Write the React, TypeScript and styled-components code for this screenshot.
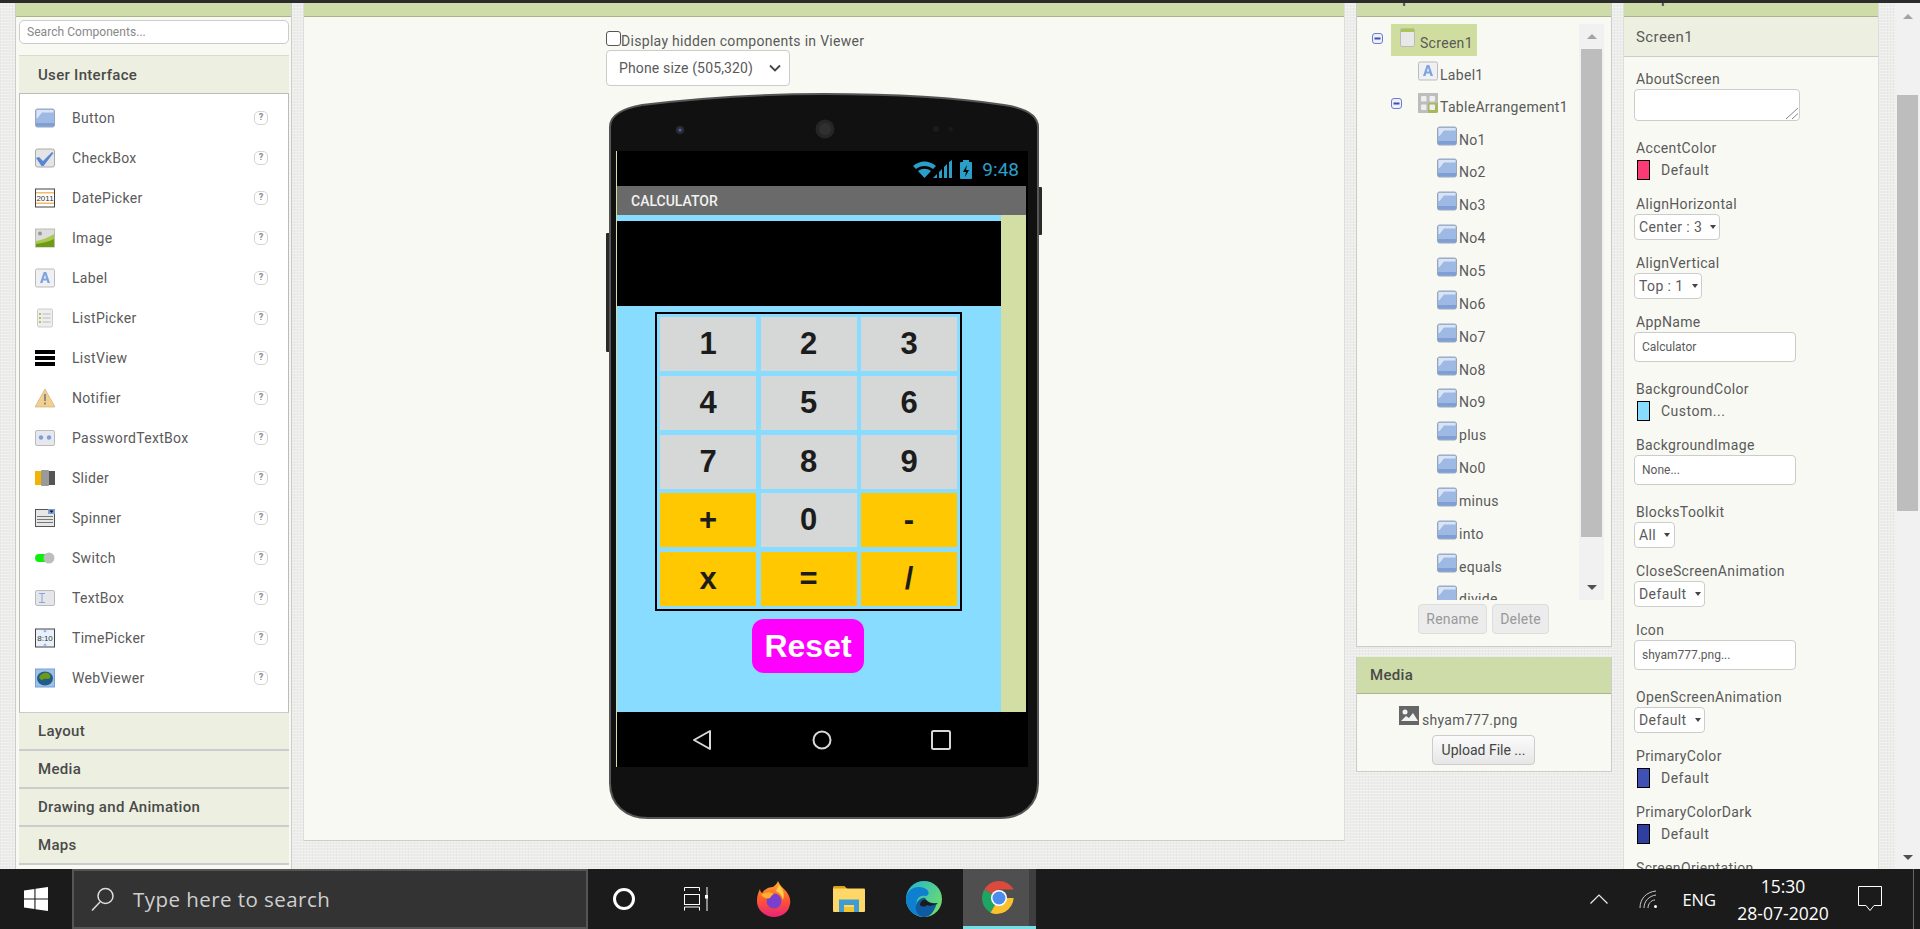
import React from "react";
import styled, { createGlobalStyle } from "styled-components";

const GlobalStyle = createGlobalStyle`
  html, body { margin: 0; padding: 0; height: 100%; overflow: hidden; }
  body { font-family: Roboto, "Liberation Sans", sans-serif; color: #5a5a5a; }
  * { box-sizing: border-box; }
`;

// Palette icons, drawn by hand on a 20x20 box
const ButtonIcon = () => (
  <svg width="20" height="20" viewBox="0 0 20 20">
    <rect x="0.5" y="1" width="19" height="18" rx="2" fill="#9db9e4" stroke="#9aa5b8" />
    <rect x="1" y="15" width="18" height="3.5" fill="#7f9fd4" />
    <path d="M1.5 2h17v2.5H7L2.5 10H1.5z" fill="#d9e5f7" />
  </svg>
);
const CheckBoxIcon = () => (
  <svg width="20" height="20" viewBox="0 0 20 20">
    <rect x="0.5" y="1" width="19" height="18" rx="2" fill="#e4e4e4" stroke="#aaa" />
    <path d="M1 10l3-1 4 4 9-9 1.500 1-10 13h-2z" fill="#5b86d2" />
  </svg>
);
const DatePickerIcon = () => (
  <svg width="20" height="20" viewBox="0 0 20 20">
    <rect x="0.500" y="1" width="19" height="18" fill="#fff" stroke="#444" />
    <rect x="1" y="4" width="18" height="1.500" fill="#f2b968" />
    <rect x="1" y="14.500" width="18" height="1.500" fill="#f2b968" />
    <text x="10" y="13" fontSize="8" textAnchor="middle" fontFamily="Liberation Sans" fill="#333">2011</text>
  </svg>
);
const ImageIcon = () => (
  <svg width="20" height="20" viewBox="0 0 20 20">
    <rect x="0.500" y="1" width="19" height="18" fill="#ddd" stroke="#bbb" />
    <circle cx="5" cy="5.500" r="2" fill="#999" />
    <path d="M1 13c6-1 11-3 18-7v13H1z" fill="#a8c94f" />
    <path d="M1 16c6-1 12-2 18-5v8H1z" fill="#6f9a16" />
  </svg>
);
const LabelIcon = () => (
  <svg width="20" height="20" viewBox="0 0 20 20">
    <rect x="0.500" y="1" width="19" height="18" rx="1.500" fill="#eef0f4" stroke="#bbb" />
    <path d="M8.700 4h2.600l3.700 11h-2.500l-.7-2.500H8.200L7.500 15H5zM8.800 10.500h2.400L10 6.700z" fill="#7fa3dd" />
  </svg>
);
const ListPickerIcon = () => (
  <svg width="20" height="20" viewBox="0 0 20 20">
    <rect x="2.500" y="1" width="15" height="18" rx="1.500" fill="#eee" stroke="#ccc" />
    <path d="M4 5h2v2H4zM4 9h2v2H4zM4 13h2v2H4z" fill="#a8c94f" />
    <path d="M7.500 5.500h8v1h-8zM7.500 9.500h8v1h-8zM7.500 13.500h8v1h-8z" fill="#bbb" />
  </svg>
);
const ListViewIcon = () => (
  <svg width="20" height="20" viewBox="0 0 20 20">
    <path d="M0 2h20v4H0zM0 8h20v4H0zM0 14h20v4H0z" fill="#000" />
  </svg>
);
const NotifierIcon = () => (
  <svg width="20" height="20" viewBox="0 0 20 20">
    <path d="M10 1l10 18H0z" fill="#f0cf8f" stroke="#c9a86a" strokeWidth="0.600" />
    <path d="M9 6h2v7H9zM9 14.500h2v2H9z" fill="#8a8a8a" />
  </svg>
);
const PasswordIcon = () => (
  <svg width="20" height="20" viewBox="0 0 20 20">
    <rect x="0.500" y="2.500" width="19" height="15" rx="1.500" fill="#e6e8ee" stroke="#bbb" />
    <circle cx="6" cy="9.500" r="2.200" fill="#7d9fd8" />
    <circle cx="14" cy="9.500" r="2.200" fill="#7d9fd8" />
  </svg>
);
const SliderIcon = () => (
  <svg width="20" height="20" viewBox="0 0 20 20">
    <rect x="0" y="3" width="6" height="14" fill="#f2b400" />
    <rect x="6" y="2" width="8" height="16" rx="1" fill="#9a9a9a" />
    <rect x="14" y="3" width="6" height="14" fill="#555" />
  </svg>
);
const SpinnerIcon = () => (
  <svg width="20" height="20" viewBox="0 0 20 20">
    <rect x="0.500" y="1.500" width="19" height="17" fill="#e6e6e6" stroke="#555" />
    <rect x="13" y="1" width="7" height="5" fill="#7d9fd8" />
    <path d="M14.500 2.500h4L16.500 5z" fill="#111" />
    <path d="M2 8h16v1H2zM2 11h16v1H2zM2 14h16v1H2z" fill="#777" />
  </svg>
);
const SwitchIcon = () => (
  <svg width="20" height="20" viewBox="0 0 20 20">
    <rect x="0" y="6" width="14" height="8" rx="4" fill="#0cf00c" />
    <circle cx="14" cy="10" r="5.500" fill="#bdbdbd" />
  </svg>
);
const TextBoxIcon = () => (
  <svg width="20" height="20" viewBox="0 0 20 20">
    <rect x="0.500" y="2.500" width="19" height="15" rx="1.500" fill="#e4e6ea" stroke="#bbb" />
    <path d="M4 5h6v1H7.500v8H10v1H4v-1h2.500V6H4z" fill="#8aa6d6" />
  </svg>
);
const TimePickerIcon = () => (
  <svg width="20" height="20" viewBox="0 0 20 20">
    <rect x="0.500" y="1" width="19" height="18" fill="#e8f1fb" stroke="#444" />
    <path d="M8 2.500h4L10 4.500zM8 17.500h4l-2-2z" fill="#7d9fd8" />
    <text x="10" y="13" fontSize="8" textAnchor="middle" fontFamily="Liberation Sans" fill="#333">8:10</text>
  </svg>
);
const WebViewerIcon = () => (
  <svg width="20" height="20" viewBox="0 0 20 20">
    <rect x="0.500" y="1" width="19" height="18" fill="#9cc0ea" stroke="#7d9fd8" />
    <ellipse cx="10" cy="10.500" rx="8" ry="7" fill="#1f5c86" />
    <path d="M4 9c2-4 6-5 9-4 2 1 3 3 2 5-2 2-4 0-6 1s-3 2-5-2z" fill="#6f9a16" />
  </svg>
);
const ScreenIcon = () => (
  <svg width="15" height="19" viewBox="0 0 15 19">
    <rect x="0.500" y="0.500" width="14" height="18" rx="1.500" fill="#e8e8e8" stroke="#bbb" />
    <rect x="1" y="1" width="13" height="3" fill="#a8c94f" />
  </svg>
);
const TableIcon = () => (
  <svg width="20" height="20" viewBox="0 0 20 20">
    <rect width="20" height="20" rx="1.500" fill="#a8b860" />
    <path d="M0 0h20v10H10v10H0z" fill="#bdbdbd" />
    <rect x="3" y="3" width="5.500" height="5.500" rx="1" fill="#eee" />
    <rect x="11.500" y="3" width="5.500" height="5.500" rx="1" fill="#eee" />
    <rect x="3" y="11.500" width="5.500" height="5.500" rx="1" fill="#eee" />
    <rect x="11.500" y="11.500" width="5.500" height="5.500" rx="1" fill="#eee" />
  </svg>
);
const MinusBox = () => (
  <svg width="11" height="11" viewBox="0 0 11 11">
    <rect x="0.500" y="0.500" width="10" height="10" rx="2.500" fill="#eef0fa" stroke="#6f7bd0" />
    <rect x="2.500" y="4.500" width="6" height="2" fill="#3f4fb0" />
  </svg>
);
const MediaFileIcon = () => (
  <svg width="20" height="20" viewBox="0 0 20 20">
    <rect width="20" height="19" fill="#666" />
    <circle cx="6" cy="6" r="2.500" fill="#f3f3f3" />
    <path d="M2 15l5-5 3 2 4-5 5 8z" fill="#f3f3f3" />
  </svg>
);

const PhoneBody = () => (
  <PhoneArt viewBox="0 0 436 726" width="436" height="726">
    <rect x="0" y="140" width="6" height="119" rx="1" fill="#2a2a2a" />
    <rect x="430" y="94" width="6" height="48" rx="1" fill="#2a2a2a" />
    <path
      d="M4 34C4 22 18 15 36 12C110 3 180 1 218 1C270 1 340 3 398 12C418 15 432 22 432 34V690C432 712 416 725 394 725H42C20 725 4 712 4 690Z"
      fill="#111"
      stroke="#555"
      strokeWidth="2"
    />
    <circle cx="74" cy="37" r="4" fill="#2c2c36" />
    <circle cx="74" cy="37" r="1.500" fill="#5560a0" />
    <circle cx="219" cy="36" r="9.500" fill="#262626" />
    <circle cx="219" cy="36" r="6" fill="#303030" />
    <circle cx="330" cy="36" r="3" fill="#1c1c1c" />
    <circle cx="345" cy="36" r="2" fill="#1c1c1c" />
  </PhoneArt>
);

const StatusIcons = () => (
  <svg width="62" height="20" viewBox="0 0 62 20">
    <path d="M1 6c7-6 16-6 23 0l-3 3c-5-4-12-4-17 0zM6 11c4-3 9-3 13 0l-6.500 7z" fill="#2a9fc9" />
    <path d="M21 18l4-4v4zM27 18v-6l3-3v9zM32 18V7l3-3v14zM37 18V2l3-2v18z" fill="#2a9fc9" />
    <rect x="48" y="2" width="12" height="17" rx="1" fill="#2a9fc9" />
    <rect x="51" y="0" width="6" height="3" fill="#2a9fc9" />
    <path d="M55 5l-4 7h3l-1 5 4-7h-3z" fill="#000" />
  </svg>
);
const BackIcon = () => (
  <svg width="20" height="22" viewBox="0 0 20 22">
    <path d="M18 2v18L2 11z" fill="none" stroke="#d8d8d8" strokeWidth="2" strokeLinejoin="round" />
  </svg>
);
const HomeIcon = () => (
  <svg width="20" height="20" viewBox="0 0 20 20">
    <circle cx="10" cy="10" r="8.500" fill="none" stroke="#d8d8d8" strokeWidth="2" />
  </svg>
);
const RecentIcon = () => (
  <svg width="20" height="20" viewBox="0 0 20 20">
    <rect x="1" y="1" width="18" height="18" rx="1.500" fill="none" stroke="#d8d8d8" strokeWidth="2" />
  </svg>
);

// Taskbar drawings
const WindowsLogo = () => (
  <svg width="24" height="24" viewBox="0 0 24 24">
    <path d="M0 3.400l10.400-1.400v9.500H0zM11.500 1.800L24 0v11.500H11.500zM0 12.500h10.400V22L0 20.600zM11.500 12.500H24V24l-12.500-1.800z" fill="#fff" />
  </svg>
);
const SearchGlass = () => (
  <svg width="24" height="24" viewBox="0 0 24 24">
    <circle cx="14.500" cy="9" r="7.500" fill="none" stroke="#ddd" strokeWidth="1.500" />
    <path d="M9 15L1 23.500" stroke="#ddd" strokeWidth="1.500" />
  </svg>
);
const TaskView = () => (
  <svg width="24" height="24" viewBox="0 0 24 24">
    <path d="M0.500 4V0.500h15V4M0.500 23.500V20h15v3.500M23 0v24" fill="none" stroke="#fff" />
    <rect x="0.500" y="7.500" width="15" height="10" fill="none" stroke="#fff" />
    <rect x="21" y="8" width="3.500" height="3.500" fill="#fff" />
  </svg>
);
const FirefoxLogo = () => (
  <svg width="34" height="36" viewBox="0 0 34 36">
    <defs>
      <linearGradient id="ffBody" x1="0" y1="0" x2="0" y2="1">
        <stop offset="0" stopColor="#ffb02e" />
        <stop offset="0.500" stopColor="#ff5a2c" />
        <stop offset="1" stopColor="#e8227a" />
      </linearGradient>
    </defs>
    <path d="M21 0c1 3 3 5 6 8 5 5 7 10 6 15-1 8-8 13-16 13S1 30 0 22c-.500-5 1-10 3-14 0 2 1 3 2 4 2-3 6-6 11-6 2-2 4-3 5-6z" fill="url(#ffBody)" />
    <circle cx="17" cy="20" r="7.500" fill="#7b3fd0" />
    <path d="M4 14c4-3 9-3 13-1-2 1-3 2-4 4-3 1-6 0-9-3z" fill="#ffb02e" />
    <path d="M22 4c4 4 6 9 4 15-1-4-3-7-7-9 1-2 2-4 3-6z" fill="#ffcf4a" />
  </svg>
);
const ExplorerLogo = () => (
  <svg width="32" height="26" viewBox="0 0 32 26">
    <path d="M0 1.500A1.500 1.500 0 0 1 1.500 0h10l3 3H0z" fill="#d9a21a" />
    <path d="M0 2.500h31a1 1 0 0 1 1 1V25a1 1 0 0 1-1 1H1a1 1 0 0 1-1-1z" fill="#fdd868" />
    <path d="M6 26V13.500h20V26h-5v-7h-10v7z" fill="#3f9bd0" />
    <rect x="11" y="21" width="10" height="5" fill="#f4c430" />
  </svg>
);
const EdgeLogo = () => (
  <svg width="36" height="36" viewBox="0 0 36 36">
    <defs>
      <linearGradient id="edgeTop" x1="0" y1="0" x2="1" y2="0.700">
        <stop offset="0" stopColor="#1fb5d8" />
        <stop offset="1" stopColor="#6fdc6a" />
      </linearGradient>
    </defs>
    <circle cx="18" cy="18" r="18" fill="url(#edgeTop)" />
    <path d="M0 18C1 8 10 4 18 7c6 2 6 8 1 8-6-1-10 4-8 11 1 4 6 8 13 8a18 18 0 0 1-6 2C8 36 0 28 0 18z" fill="#0f7fd0" />
    <path d="M18 36c-6-1-9-6-8-11 1-5 5-9 9-8 2 3 5 6 12 5-3 9-7 14-13 14z" fill="#0f5aa0" />
    <path d="M14 24c0-3 3-6 6-5 2 3 7 4 12 3-1 1-2 1-4 2-4 1-5 1-7 0-2 2-5 2-7 0z" fill="#1b1b1b" />
  </svg>
);
const ChromeLogo = () => (
  <svg width="34" height="34" viewBox="0 0 34 34">
    <path d="M17 17L2.300 8.500A17 17 0 0 1 31.700 8.500H17z" fill="#db4a3c" />
    <path d="M17 17l-8.500 14.700A17 17 0 0 1 2.300 8.500z" fill="#1fa463" />
    <path d="M17 17h14.700a17 17 0 0 1-23.200 14.700z" fill="#fbc02d" />
    <circle cx="17" cy="17" r="8" fill="#fff" />
    <circle cx="17" cy="17" r="6.500" fill="#4a8cf0" />
  </svg>
);
const TrayChevron = () => (
  <svg width="18" height="10" viewBox="0 0 18 10">
    <path d="M0.500 9.500L9 1l8.500 8.500" fill="none" stroke="#eee" strokeWidth="1.200" />
  </svg>
);
const TrayWifi = () => (
  <svg width="19" height="19" viewBox="0 0 19 19">
    <g fill="none" stroke="#ccc" strokeWidth="1">
      <path d="M1 18C1 9 7 2 17 1" />
      <path d="M5 18C5 11 10 6 17 5" />
      <path d="M9 18C9 14 12 10 16 10" />
    </g>
    <circle cx="16.500" cy="16.500" r="1.500" fill="#fff" />
  </svg>
);
const TrayNote = () => (
  <svg width="24" height="26" viewBox="0 0 24 26">
    <path d="M0.500 0.500h23v19H16l-4 5-4-5H0.500z" fill="none" stroke="#fff" strokeWidth="1" />
  </svg>
);

const paletteItems: [string, React.FC][] = [
  ["Button", ButtonIcon],
  ["CheckBox", CheckBoxIcon],
  ["DatePicker", DatePickerIcon],
  ["Image", ImageIcon],
  ["Label", LabelIcon],
  ["ListPicker", ListPickerIcon],
  ["ListView", ListViewIcon],
  ["Notifier", NotifierIcon],
  ["PasswordTextBox", PasswordIcon],
  ["Slider", SliderIcon],
  ["Spinner", SpinnerIcon],
  ["Switch", SwitchIcon],
  ["TextBox", TextBoxIcon],
  ["TimePicker", TimePickerIcon],
  ["WebViewer", WebViewerIcon],
];

const drawers = ["Layout", "Media", "Drawing and Animation", "Maps"];

const keys = ["1", "2", "3", "4", "5", "6", "7", "8", "9", "+", "0", "-", "x", "=", "/"];
const orangeKeys = "+-x=/";

const buttonNodes = ["No1", "No2", "No3", "No4", "No5", "No6", "No7", "No8", "No9", "plus", "No0", "minus", "into", "equals", "divide"];

type Prop =
  | { label: string; kind: "area" }
  | { label: string; kind: "color"; color: string; value: string }
  | { label: string; kind: "select"; value: string; width: number }
  | { label: string; kind: "input"; value: string };

const properties: Prop[] = [
  { label: "AboutScreen", kind: "area" },
  { label: "AccentColor", kind: "color", color: "#fb3a76", value: "Default" },
  { label: "AlignHorizontal", kind: "select", value: "Center : 3", width: 86 },
  { label: "AlignVertical", kind: "select", value: "Top : 1", width: 68 },
  { label: "AppName", kind: "input", value: "Calculator" },
  { label: "BackgroundColor", kind: "color", color: "#87dcff", value: "Custom..." },
  { label: "BackgroundImage", kind: "input", value: "None..." },
  { label: "BlocksToolkit", kind: "select", value: "All", width: 41 },
  { label: "CloseScreenAnimation", kind: "select", value: "Default", width: 71 },
  { label: "Icon", kind: "input", value: "shyam777.png..." },
  { label: "OpenScreenAnimation", kind: "select", value: "Default", width: 71 },
  { label: "PrimaryColor", kind: "color", color: "#3f51b5", value: "Default" },
  { label: "PrimaryColorDark", kind: "color", color: "#303f9f", value: "Default" },
  { label: "ScreenOrientation", kind: "select", value: "Unspecified", width: 100 },
];

const App: React.FC = () => {
  return (
    <Page>
      <GlobalStyle />
      <TopStrip />
      <Main>
        <PaletteColumn>
          <PanelHeader>Palette</PanelHeader>
          <SearchBox placeholder="Search Components..." readOnly />
          <GroupHeader>User Interface</GroupHeader>
          <PaletteList>
            {paletteItems.map(([name, Icon]) => (
              <PaletteRow key={name}>
                <IconSlot>
                  <Icon />
                </IconSlot>
                <PaletteName>{name}</PaletteName>
                <HelpMark>?</HelpMark>
              </PaletteRow>
            ))}
          </PaletteList>
          {drawers.map((d) => (
            <Drawer key={d}>{d}</Drawer>
          ))}
        </PaletteColumn>

        <ViewerColumn>
          <PanelHeader>Viewer</PanelHeader>
          <ViewerBody>
            <CheckRow>
              <CheckBox type="checkbox" readOnly />
              Display hidden components in Viewer
            </CheckRow>
            <SizeSelect>
              Phone size (505,320)
              <svg width="12" height="8" viewBox="0 0 12 8">
                <path d="M1 1.500l5 5 5-5" fill="none" stroke="#444" strokeWidth="1.800" />
              </svg>
            </SizeSelect>
            <Phone>
              <PhoneBody />
              <Screen>
                <StatusBar>
                  <StatusIcons />
                  <Clock>9:48</Clock>
                </StatusBar>
                <TitleBar>CALCULATOR</TitleBar>
                <ScreenBody>
                  <Form>
                    <Display />
                    <KeyTable>
                      {keys.map((k) => (
                        <Key key={k} $accent={orangeKeys.includes(k)}>
                          {k}
                        </Key>
                      ))}
                    </KeyTable>
                    <ResetButton>Reset</ResetButton>
                  </Form>
                  <SideStrip />
                </ScreenBody>
                <NavBar>
                  <BackIcon />
                  <HomeIcon />
                  <RecentIcon />
                </NavBar>
              </Screen>
            </Phone>
          </ViewerBody>
        </ViewerColumn>

        <ComponentsColumn>
          <TreePanel>
            <PanelHeader>Components</PanelHeader>
            <TreeArea>
              <TreeList>
                <ScreenRow>
                  <Toggle $top={9}>
                    <MinusBox />
                  </Toggle>
                  <ScreenChip>
                    <ScreenIcon />
                    <ScreenName>Screen1</ScreenName>
                  </ScreenChip>
                </ScreenRow>
                <TreeRow $indent={61}>
                  <NodeIcon>
                    <LabelIcon />
                  </NodeIcon>
                  <NodeName>Label1</NodeName>
                </TreeRow>
                <TreeRow $indent={34} $tall>
                  <Toggle $top={7}>
                    <MinusBox />
                  </Toggle>
                  <NodeIcon $left={16}>
                    <TableIcon />
                  </NodeIcon>
                  <NodeName>TableArrangement1</NodeName>
                </TreeRow>
                {buttonNodes.map((n) => (
                  <TreeRow key={n} $indent={80} $fine>
                    <NodeIcon>
                      <ButtonIcon />
                    </NodeIcon>
                    <NodeName>{n}</NodeName>
                  </TreeRow>
                ))}
              </TreeList>
              <TreeScroll>
                <ArrowCell $h={25}>
                  <ArrowUp />
                </ArrowCell>
                <ScrollThumb $top={0} $h={488} />
                <ArrowCell $h={26} $end>
                  <ArrowDown />
                </ArrowCell>
              </TreeScroll>
            </TreeArea>
            <TreeButtons>
              <DisabledButton $w={69}>Rename</DisabledButton>
              <DisabledButton $w={57}>Delete</DisabledButton>
            </TreeButtons>
          </TreePanel>
          <MediaPanel>
            <PanelHeader>Media</PanelHeader>
            <MediaRow>
              <MediaFileIcon />
              <MediaName>shyam777.png</MediaName>
            </MediaRow>
            <UploadButton>Upload File ...</UploadButton>
          </MediaPanel>
        </ComponentsColumn>

        <PropertiesColumn>
          <PanelHeader>Properties</PanelHeader>
          <SubHeader>Screen1</SubHeader>
          <PropList>
            {properties.map((p) => (
              <div key={p.label}>
                <PropLabel>{p.label}</PropLabel>
                {p.kind === "area" && (
                  <TextArea>
                    <svg width="14" height="13" viewBox="0 0 14 13">
                      <path d="M1 12L13 1M7 12l6-5.500" stroke="#666" strokeWidth="0.800" />
                    </svg>
                  </TextArea>
                )}
                {p.kind === "color" && (
                  <ColorRow>
                    <Swatch $color={p.color} />
                    {p.value}
                  </ColorRow>
                )}
                {p.kind === "select" && (
                  <PropSelect $width={p.width}>
                    {p.value}
                    <MiniCaret />
                  </PropSelect>
                )}
                {p.kind === "input" && <PropInput>{p.value}</PropInput>}
              </div>
            ))}
          </PropList>
        </PropertiesColumn>

        <PageScroll>
          <ArrowCell $h={26}>
            <ArrowUp />
          </ArrowCell>
          <ScrollThumb $top={66} $h={416} />
          <ArrowCell $h={24} $end>
            <ArrowDown />
          </ArrowCell>
        </PageScroll>
      </Main>

      <Taskbar>
        <StartCell>
          <WindowsLogo />
        </StartCell>
        <SearchField>
          <SearchGlass />
          <SearchHint>Type here to search</SearchHint>
        </SearchField>
        <Cortana />
        <TaskSlot $left={49}>
          <TaskView />
        </TaskSlot>
        <TaskSlot $left={49}>
          <FirefoxLogo />
        </TaskSlot>
        <TaskSlot $left={42}>
          <ExplorerLogo />
        </TaskSlot>
        <TaskSlot $left={41}>
          <EdgeLogo />
        </TaskSlot>
        <ActiveTask>
          <ChromeLogo />
        </ActiveTask>
        <Tray>
          <TrayChevron />
          <TaskSlot $left={31}>
            <TrayWifi />
          </TaskSlot>
          <TrayLang>ENG</TrayLang>
          <TrayClock>
            <span>15:30</span>
            <span>28-07-2020</span>
          </TrayClock>
          <TaskSlot $left={25}>
            <TrayNote />
          </TaskSlot>
          <TrayEdge />
        </Tray>
      </Taskbar>
    </Page>
  );
};

export default App;

const Page = styled.div`
  width: 1920px;
  height: 929px;
  display: flex;
  flex-direction: column;
  overflow: hidden;
  background-color: #ebebe9;
`;

const TopStrip = styled.div`
  height: 3px;
  flex: none;
  background: #2b2b2b;
`;

const Main = styled.div`
  flex: 1;
  min-height: 0;
  display: flex;
  align-items: stretch;
  padding-left: 15px;
  overflow: hidden;
  background-color: #ececea;
  background-image: repeating-linear-gradient(0deg, rgba(255, 255, 255, 0.35) 0 1px, transparent 1px 3px),
    repeating-linear-gradient(90deg, rgba(0, 0, 0, 0.025) 0 1px, transparent 1px 3px);
`;

const PanelHeader = styled.div`
  height: 37px;
  flex: none;
  padding-left: 13px;
  display: flex;
  align-items: center;
  background: #cddca8;
  border-bottom: 1px solid #a9b48f;
  font-size: 15px;
  font-weight: 500;
  letter-spacing: 0.3px;
  color: #4a4a4a;
`;

const PaletteColumn = styled.div`
  width: 277px;
  height: 900px;
  flex: none;
  margin-top: -23px;
  background: #f8f9f3;
  border-left: 1px solid #ccc;
  border-right: 1px solid #ccc;
`;

const SearchBox = styled.input`
  display: block;
  width: 270px;
  height: 24px;
  margin: 3px 0 11px 3px;
  padding: 0 7px;
  border: 1px solid #ccc;
  border-radius: 5px;
  background: #fff;
  font: 12px Roboto, sans-serif;
  letter-spacing: 0.05px;
  &::placeholder {
    color: #888;
  }
`;

const GroupHeader = styled.div`
  height: 38px;
  margin: 0 0 0 3px;
  width: 270px;
  padding-left: 19px;
  display: flex;
  align-items: center;
  background: #edf0e0;
  border-top: 1px solid #d8dcc8;
  font-size: 15px;
  font-weight: 500;
  letter-spacing: 0.3px;
  color: #4a4a4a;
`;

const PaletteList = styled.div`
  width: 270px;
  height: 620px;
  margin-left: 3px;
  padding-top: 4px;
  background: #fff;
  border: 1px solid #bbb;
  border-bottom-color: #ccc;
`;

const PaletteRow = styled.div`
  height: 40px;
  display: flex;
  align-items: center;
  padding-left: 15px;
`;

const IconSlot = styled.span`
  width: 20px;
  height: 20px;
  flex: none;
  display: flex;
  margin-right: 17px;
`;

const PaletteName = styled.span`
  flex: 1;
  font-size: 14px;
  letter-spacing: 0.3px;
`;

const HelpMark = styled.span`
  width: 14px;
  height: 14px;
  margin-right: 20px;
  border: 1.5px solid #d4d4d4;
  border-radius: 5px;
  font-size: 9px;
  font-weight: 700;
  line-height: 11px;
  text-align: center;
  color: #888;
`;

const Drawer = styled.div`
  width: 270px;
  height: 38px;
  margin-left: 3px;
  padding-left: 19px;
  display: flex;
  align-items: center;
  background: #edf0e0;
  border-bottom: 2px solid #ccc;
  font-size: 15px;
  font-weight: 500;
  letter-spacing: 0.3px;
  color: #4a4a4a;
`;

const ViewerColumn = styled.div`
  width: 1042px;
  height: 861px;
  flex: none;
  margin: -23px 0 0 11px;
  background: #f8f9f3;
  border-bottom: 1px solid #ccc;
  border-left: 1px solid #ddd;
  border-right: 1px solid #ddd;
`;

const ViewerBody = styled.div`
  padding: 14px 0 0 302px;
`;

const CheckRow = styled.div`
  height: 19px;
  display: flex;
  align-items: flex-start;
  font-size: 14px;
  line-height: 20px;
  letter-spacing: 0.3px;
`;

const CheckBox = styled.input`
  appearance: none;
  width: 15px;
  height: 15px;
  margin: 0;
  background: #fff;
  border: 1px solid #555;
  border-radius: 3px;
`;

const SizeSelect = styled.div`
  width: 184px;
  height: 36px;
  padding: 0 8px 0 12px;
  display: flex;
  align-items: center;
  justify-content: space-between;
  background: #fff;
  border: 1px solid #ccc;
  border-radius: 4px;
  font-size: 14px;
  letter-spacing: 0.15px;
`;

const Phone = styled.div`
  position: relative;
  width: 436px;
  height: 726px;
  margin-top: 7px;
  padding: 58px 0 0 10px;
`;

const PhoneArt = styled.svg`
  position: absolute;
  left: 0;
  top: 0;
`;

const Screen = styled.div`
  position: relative;
  width: 412px;
  height: 616px;
  display: flex;
  flex-direction: column;
  background: #000;
  border-left: 1px solid #d2dea3;
`;

const StatusBar = styled.div`
  height: 35px;
  flex: none;
  display: flex;
  align-items: center;
  justify-content: flex-end;
  padding: 2px 9px 0 0;
  gap: 8px;
`;

const Clock = styled.span`
  font-size: 19px;
  color: #2a9fc9;
`;

const TitleBar = styled.div`
  width: 409px;
  height: 29px;
  flex: none;
  padding-left: 14px;
  display: flex;
  align-items: center;
  background: #6a6a6a;
  font-size: 14px;
  font-weight: 500;
  color: #f2f2f2;
`;

const ScreenBody = styled.div`
  width: 409px;
  height: 497px;
  flex: none;
  display: flex;
`;

const Form = styled.div`
  width: 384px;
  padding-top: 6px;
  background: #87dcff;
`;

const SideStrip = styled.div`
  flex: 1;
  background: #d2dea3;
`;

const Display = styled.div`
  height: 85px;
  background: #000;
`;

const KeyTable = styled.div`
  width: 307px;
  height: 299px;
  margin: 6px 0 0 38px;
  padding: 3px;
  display: grid;
  grid-template-columns: repeat(3, 96px);
  grid-template-rows: repeat(5, 54px);
  column-gap: 4.5px;
  row-gap: 4.75px;
  border: 2px solid #000;
`;

const Key = styled.div<{ $accent: boolean }>`
  display: flex;
  align-items: center;
  justify-content: center;
  background: ${(p) => (p.$accent ? "#ffc800" : "#d6d7d7")};
  font-family: "Liberation Sans", Arial, sans-serif;
  font-size: 31px;
  font-weight: 700;
  color: #1c1c1c;
`;

const ResetButton = styled.div`
  width: 112px;
  height: 54px;
  margin: 8px 0 0 135px;
  display: flex;
  align-items: center;
  justify-content: center;
  background: #ff00ff;
  border-radius: 12px;
  font-family: "Liberation Sans", Arial, sans-serif;
  font-size: 32px;
  font-weight: 700;
  color: #fff;
`;

const NavBar = styled.div`
  flex: 1;
  display: grid;
  grid-template-columns: 120px 119px 111px;
  padding-left: 75px;
  align-items: center;
  justify-items: start;
`;

const ComponentsColumn = styled.div`
  width: 256px;
  flex: none;
  margin: -23px 0 0 11px;
`;

const TreePanel = styled.div`
  height: 667px;
  display: flex;
  flex-direction: column;
  background: #f8f9f3;
  border: 1px solid #ccc;
  border-top: 0;
`;

const TreeArea = styled.div`
  height: 576px;
  flex: none;
  margin-top: 7px;
  display: flex;
  padding-right: 7px;
`;

const TreeList = styled.div`
  flex: 1;
  min-width: 0;
  overflow: hidden;
`;

const ScreenRow = styled.div`
  height: 35px;
  position: relative;
  padding-left: 34px;
`;

const Toggle = styled.span<{ $top: number }>`
  display: flex;
  flex: none;
  margin-top: ${(p) => p.$top}px;
  ${ScreenRow} & {
    position: absolute;
    left: 15px;
    top: 0;
  }
`;

const ScreenChip = styled.div`
  width: 86px;
  height: 32px;
  display: flex;
  padding: 4px 0 0 9px;
  background: #cfdd9f;
`;

const ScreenName = styled.span`
  margin: 6px 0 0 5px;
  font-size: 14px;
  line-height: 18px;
  letter-spacing: 0.3px;
`;

const TreeRow = styled.div<{ $indent: number; $fine?: boolean; $tall?: boolean }>`
  height: ${(p) => (p.$fine ? "32.85px" : p.$tall ? "32.6px" : "32px")};
  display: flex;
  align-items: flex-start;
  padding-left: ${(p) => p.$indent}px;
`;

const NodeIcon = styled.span<{ $left?: number }>`
  display: flex;
  flex: none;
  width: 20px;
  height: 20px;
  margin: 2px 2px 0 ${(p) => p.$left ?? 0}px;
`;

const NodeName = styled.span`
  margin-top: 7px;
  font-size: 14px;
  line-height: 18px;
  letter-spacing: 0.3px;
  white-space: nowrap;
`;

const TreeScroll = styled.div`
  width: 25px;
  flex: none;
  display: flex;
  flex-direction: column;
  background: #f1f1f1;
`;

const ArrowCell = styled.div<{ $h: number; $end?: boolean }>`
  height: ${(p) => p.$h}px;
  flex: none;
  display: flex;
  align-items: center;
  justify-content: center;
  ${(p) => (p.$end ? "margin-top: auto;" : "")}
`;

const ArrowUp = styled.span`
  width: 0;
  height: 0;
  border: 5.5px solid transparent;
  border-top: 0;
  border-bottom: 5.5px solid #a3a3a3;
`;

const ArrowDown = styled.span`
  width: 0;
  height: 0;
  border: 5.5px solid transparent;
  border-bottom: 0;
  border-top: 5.5px solid #505050;
`;

const ScrollThumb = styled.div<{ $top: number; $h: number }>`
  height: ${(p) => p.$h}px;
  flex: none;
  margin: ${(p) => p.$top}px 2px 0;
  background: #bdbdbd;
`;

const TreeButtons = styled.div`
  display: flex;
  gap: 5px;
  padding: 4px 0 0 61px;
`;

const DisabledButton = styled.div<{ $w: number }>`
  width: ${(p) => p.$w}px;
  height: 30px;
  display: flex;
  align-items: center;
  justify-content: center;
  background: #ececec;
  border: 1px solid #ddd;
  border-radius: 4px;
  font-size: 14px;
  letter-spacing: 0.2px;
  color: #999;
`;

const MediaPanel = styled.div`
  height: 115px;
  margin-top: 10px;
  background: #f8f9f3;
  border: 1px solid #ccc;
  border-top: 0;
`;

const MediaRow = styled.div`
  display: flex;
  align-items: flex-start;
  padding: 12px 0 0 42px;
  height: 41px;
`;

const MediaName = styled.span`
  margin: 5px 0 0 3px;
  font-size: 14px;
  line-height: 18px;
  letter-spacing: 0.3px;
`;

const UploadButton = styled.div`
  width: 103px;
  height: 30px;
  margin-left: 75px;
  display: flex;
  align-items: center;
  justify-content: center;
  background: linear-gradient(#fbfbfb, #e6e6e6);
  border: 1px solid #ccc;
  border-radius: 4px;
  font-size: 14px;
  color: #444;
`;

const PropertiesColumn = styled.div`
  width: 256px;
  flex: none;
  margin: -23px 0 0 11px;
  background: #f8f9f3;
  border-left: 1px solid #ddd;
  border-right: 1px solid #ddd;
`;

const SubHeader = styled.div`
  height: 40px;
  padding-left: 12px;
  display: flex;
  align-items: center;
  background: #edf0e0;
  border-bottom: 1px solid #ccc;
  font-size: 15px;
  letter-spacing: 0.4px;
`;

const PropList = styled.div`
  padding: 12px 0 0 10px;
`;

const PropLabel = styled.div`
  height: 20px;
  padding-left: 2px;
  font-size: 14px;
  line-height: 20px;
  letter-spacing: 0.35px;
`;

const TextArea = styled.div`
  position: relative;
  width: 166px;
  height: 32px;
  margin-bottom: 17px;
  display: flex;
  align-items: flex-end;
  justify-content: flex-end;
  background: #fff;
  border: 1px solid #ccc;
  border-radius: 4px;
`;

const ColorRow = styled.div`
  height: 20px;
  margin: 2px 0 14px;
  padding-left: 3px;
  display: flex;
  align-items: center;
  font-size: 14px;
  letter-spacing: 0.5px;
`;

const Swatch = styled.span<{ $color: string }>`
  width: 13px;
  height: 20px;
  margin-right: 11px;
  background: ${(p) => p.$color};
  border: 1px solid #000;
`;

const PropSelect = styled.div<{ $width: number }>`
  width: ${(p) => p.$width}px;
  height: 26px;
  margin-bottom: 13px;
  padding: 0 0 0 4px;
  display: flex;
  align-items: center;
  gap: 8px;
  background: #fff;
  border: 1px solid #ccc;
  border-radius: 4px;
  font-size: 14px;
  letter-spacing: 0.4px;
  white-space: nowrap;
`;

const MiniCaret = styled.span`
  width: 0;
  height: 0;
  border: 3px solid transparent;
  border-bottom: 0;
  border-top: 4px solid #444;
`;

const PropInput = styled.div`
  width: 162px;
  height: 30px;
  margin-bottom: 17px;
  padding-left: 7px;
  display: flex;
  align-items: center;
  background: #fff;
  border: 1px solid #ccc;
  border-radius: 4px;
  font-size: 12px;
`;

const PageScroll = styled.div`
  width: 25px;
  flex: none;
  margin-left: auto;
  display: flex;
  flex-direction: column;
  background: #f1f1f1;
`;

const Taskbar = styled.div`
  height: 60px;
  flex: none;
  display: flex;
  align-items: center;
  background: #1b1b1b;
  color: #fff;
`;

const StartCell = styled.div`
  width: 72px;
  padding-left: 24px;
  display: flex;
`;

const SearchField = styled.div`
  width: 516px;
  height: 60px;
  padding-left: 17px;
  display: flex;
  align-items: center;
  background: #333;
  border: 2px solid #555;
`;

const SearchHint = styled.span`
  margin-left: 18px;
  font-family: "Open Sans", sans-serif;
  font-size: 20.5px;
  letter-spacing: 0.45px;
  color: #cfcfcf;
`;

const Cortana = styled.span`
  width: 22px;
  height: 22px;
  margin-left: 25px;
  border: 3px solid #fff;
  border-radius: 50%;
`;

const TaskSlot = styled.div<{ $left: number }>`
  display: flex;
  margin-left: ${(p) => p.$left}px;
`;

const ActiveTask = styled.div`
  width: 73px;
  height: 60px;
  margin-left: 21px;
  padding-left: 19px;
  display: flex;
  align-items: center;
  background: linear-gradient(90deg, #4f4f4f 0 66px, #3e3e3e 66px);
  border-bottom: 3px solid #76dfe6;
`;

const Tray = styled.div`
  margin-left: auto;
  height: 60px;
  display: flex;
  align-items: center;
  padding-right: 6px;
`;

const TrayLang = styled.span`
  margin-left: 24px;
  font-family: "Open Sans", sans-serif;
  font-size: 16.5px;
`;

const TrayClock = styled.div`
  width: 100px;
  margin-left: 17px;
  display: flex;
  flex-direction: column;
  align-items: center;
  gap: 5px;
  font-family: "Open Sans", sans-serif;
  font-size: 17.5px;
  line-height: 22px;
`;

const TrayEdge = styled.span`
  width: 1px;
  height: 60px;
  margin-left: 31px;
  background: #666;
`;
